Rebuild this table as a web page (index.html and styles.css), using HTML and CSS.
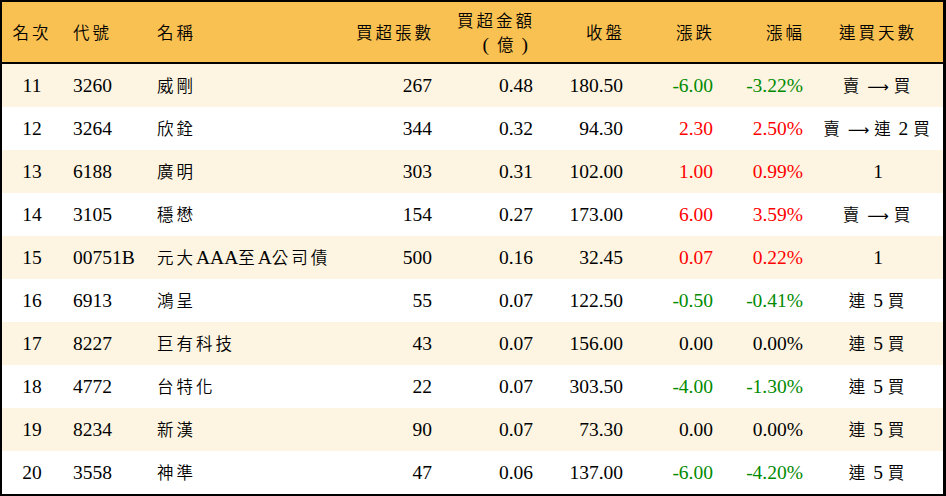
FILE: index.html
```html
<!DOCTYPE html>
<html lang="zh-Hant">
<head>
<meta charset="utf-8">
<link rel="stylesheet" href="styles.css">
</head>
<body>
<div class="board">
  <div class="row head">
    <div class="c center"><span class="zh">名次</span></div>
    <div class="c left"><span class="zh">代號</span></div>
    <div class="c left"><span class="zh">名稱</span></div>
    <div class="c right"><span class="zh">買超張數</span></div>
    <div class="c right two"><span class="zh">買超金額</span><span class="sub">(<span class="zh">億</span>)</span></div>
    <div class="c right"><span class="zh">收盤</span></div>
    <div class="c right"><span class="zh">漲跌</span></div>
    <div class="c right"><span class="zh">漲幅</span></div>
    <div class="c center"><span class="zh">連買天數</span></div>
  </div>
  <div class="row alt">
    <div class="c center">11</div><div class="c left">3260</div><div class="c left"><span class="zh">威剛</span></div>
    <div class="c right">267</div><div class="c right">0.48</div><div class="c right">180.50</div>
    <div class="c right down">-6.00</div><div class="c right down">-3.22%</div>
    <div class="c center"><span class="zh">賣</span> <span class="arr">⟶</span> <span class="zh">買</span></div>
  </div>
  <div class="row">
    <div class="c center">12</div><div class="c left">3264</div><div class="c left"><span class="zh">欣銓</span></div>
    <div class="c right">344</div><div class="c right">0.32</div><div class="c right">94.30</div>
    <div class="c right up">2.30</div><div class="c right up">2.50%</div>
    <div class="c center"><span class="zh">賣</span> <span class="arr">⟶</span> <span class="zh">連</span> 2 <span class="zh">買</span></div>
  </div>
  <div class="row alt">
    <div class="c center">13</div><div class="c left">6188</div><div class="c left"><span class="zh">廣明</span></div>
    <div class="c right">303</div><div class="c right">0.31</div><div class="c right">102.00</div>
    <div class="c right up">1.00</div><div class="c right up">0.99%</div><div class="c center">1</div>
  </div>
  <div class="row">
    <div class="c center">14</div><div class="c left">3105</div><div class="c left"><span class="zh">穩懋</span></div>
    <div class="c right">154</div><div class="c right">0.27</div><div class="c right">173.00</div>
    <div class="c right up">6.00</div><div class="c right up">3.59%</div>
    <div class="c center"><span class="zh">賣</span> <span class="arr">⟶</span> <span class="zh">買</span></div>
  </div>
  <div class="row alt">
    <div class="c center">15</div><div class="c left">00751B</div><div class="c left"><span class="zh">元大</span>AAA<span class="zh">至</span>A<span class="zh">公司債</span></div>
    <div class="c right">500</div><div class="c right">0.16</div><div class="c right">32.45</div>
    <div class="c right up">0.07</div><div class="c right up">0.22%</div><div class="c center">1</div>
  </div>
  <div class="row">
    <div class="c center">16</div><div class="c left">6913</div><div class="c left"><span class="zh">鴻呈</span></div>
    <div class="c right">55</div><div class="c right">0.07</div><div class="c right">122.50</div>
    <div class="c right down">-0.50</div><div class="c right down">-0.41%</div>
    <div class="c center"><span class="zh">連</span> 5 <span class="zh">買</span></div>
  </div>
  <div class="row alt">
    <div class="c center">17</div><div class="c left">8227</div><div class="c left"><span class="zh">巨有科技</span></div>
    <div class="c right">43</div><div class="c right">0.07</div><div class="c right">156.00</div>
    <div class="c right">0.00</div><div class="c right">0.00%</div>
    <div class="c center"><span class="zh">連</span> 5 <span class="zh">買</span></div>
  </div>
  <div class="row">
    <div class="c center">18</div><div class="c left">4772</div><div class="c left"><span class="zh">台特化</span></div>
    <div class="c right">22</div><div class="c right">0.07</div><div class="c right">303.50</div>
    <div class="c right down">-4.00</div><div class="c right down">-1.30%</div>
    <div class="c center"><span class="zh">連</span> 5 <span class="zh">買</span></div>
  </div>
  <div class="row alt">
    <div class="c center">19</div><div class="c left">8234</div><div class="c left"><span class="zh">新漢</span></div>
    <div class="c right">90</div><div class="c right">0.07</div><div class="c right">73.30</div>
    <div class="c right">0.00</div><div class="c right">0.00%</div>
    <div class="c center"><span class="zh">連</span> 5 <span class="zh">買</span></div>
  </div>
  <div class="row">
    <div class="c center">20</div><div class="c left">3558</div><div class="c left"><span class="zh">神準</span></div>
    <div class="c right">47</div><div class="c right">0.06</div><div class="c right">137.00</div>
    <div class="c right down">-6.00</div><div class="c right down">-4.20%</div>
    <div class="c center"><span class="zh">連</span> 5 <span class="zh">買</span></div>
  </div>
</div>
</body>
</html>
```

FILE: styles.css
```css
html, body {
  margin: 0;
  padding: 0;
  background: #fff;
}
.board {
  width: 946px;
  height: 496px;
  box-sizing: border-box;
  border-top: 2px solid #000;
  border-left: 2px solid #000;
  border-right: 3px solid #000;
  border-bottom: 2px solid #000;
  font-family: "Liberation Serif", "Noto Sans CJK TC", serif;
  font-size: 19.5px;
  color: #000;
  background: #fff;
}
.row {
  display: grid;
  grid-template-columns: 60px 84px 194px 102px 101px 90px 90px 90px 130px;
  height: 43px;
  align-items: center;
}
.row.alt {
  background: #fdf5e2;
}
.row.head {
  height: 60px;
  background: #f9c151;
  border-bottom: 2px solid #000;
}
.c {
  white-space: nowrap;
  line-height: 20px;
}
.center { text-align: center; }
.left { text-align: left; padding-left: 11px; }
.right { text-align: right; padding-right: 10px; }
.zh {
  font-family: "Noto Sans CJK TC", sans-serif;
  font-size: 16.5px;
  font-weight: 350;
  letter-spacing: 3px;
}
.right .zh {
  margin-right: -2px;
}
.two {
  display: flex;
  flex-direction: column;
  align-items: flex-end;
  gap: 4px;
}
.two .sub {
  letter-spacing: 8px;
  margin-right: -3px;
}
.two .sub .zh {
  letter-spacing: 8px;
  margin-right: 0;
}
.arr {
  font-family: "DejaVu Sans", sans-serif;
  font-size: 15px;
}
.up { color: #ff0000; }
.down { color: #008a00; }
```
